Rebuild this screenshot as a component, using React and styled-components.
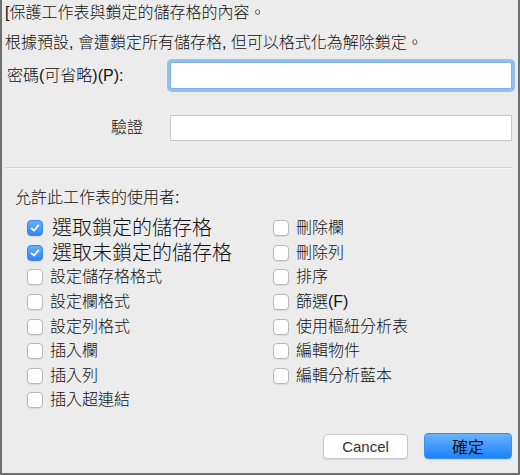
import React from "react";
import styled, { createGlobalStyle } from "styled-components";

const GlobalStyle = createGlobalStyle`
  html, body {
    margin: 0;
    padding: 0;
    background: #ececec;
  }
  body {
    font-family: "Liberation Sans", "Noto Sans CJK TC", sans-serif;
    font-weight: 300;
    color: #111;
  }
`;

const Dialog = styled.div`
  width: 520px;
  height: 475px;
  box-sizing: border-box;
  border-left: 2px solid #6e6e6e;
  border-right: 2px solid #6e6e6e;
  border-bottom: 2px solid #6e6e6e;
  background: #ececec;
  display: flex;
  flex-direction: column;
  overflow: hidden;
`;

const Intro = styled.div`
  padding: 3px 0 0 3px;
  font-size: 16px;
  line-height: 20px;

  p {
    margin: 0;
  }
  p + p {
    margin-top: 10px;
  }
`;

const Form = styled.div`
  margin-top: 9px;
  display: grid;
  grid-template-columns: 168px 342px;
  grid-template-rows: 27px 26px;
  row-gap: 26px;
`;

const Label = styled.label`
  align-self: center;
  font-size: 16px;
  line-height: 20px;
  text-align: ${(p) => (p.$right ? "right" : "left")};
  padding: ${(p) => (p.$right ? "0 27px 0 0" : "0 0 0 5px")};
`;

const Field = styled.input`
  box-sizing: border-box;
  width: 100%;
  height: 100%;
  margin: 0;
  background: #fff;
  border: 1px solid ${(p) => (p.$focused ? "#7fb0ee" : "#c9c9c9")};
  box-shadow: ${(p) => (p.$focused ? "0 0 0 3px #92bff2" : "none")};
  border-radius: ${(p) => (p.$focused ? "2px" : "0")};
  outline: none;
`;

const Separator = styled.hr`
  margin: 26px 6px 0 3px;
  border: 0;
  border-top: 1px solid #d2d2d2;
  border-bottom: 1px solid #f6f6f6;
  height: 0;
`;

const SectionTitle = styled.div`
  margin-top: 19px;
  padding-left: 13px;
  font-size: 16px;
  line-height: 20px;
`;

const Options = styled.div`
  margin-top: 8px;
  padding-left: 25px;
  display: grid;
  grid-auto-flow: column;
  grid-template-columns: 246px 1fr;
  grid-template-rows: repeat(8, 24.6px);
`;

const Option = styled.label`
  display: flex;
  align-items: center;
  gap: ${(p) => (p.$big ? "9px" : "7px")};
  font-size: ${(p) => (p.$big ? "20px" : "16px")};
  line-height: 20px;
  white-space: nowrap;
`;

const Box = styled.span`
  box-sizing: border-box;
  flex: none;
  width: 16px;
  height: 16px;
  border-radius: 4px;
  display: flex;
  align-items: center;
  justify-content: center;
  background: ${(p) =>
    p.$checked ? "linear-gradient(#6aaefa, #2f86f5)" : "#fff"};
  border: 1px solid ${(p) => (p.$checked ? "#3a87ec" : "#b9b9b9")};
  box-shadow: 0 1px 1px rgba(0, 0, 0, 0.08);
`;

const Footer = styled.div`
  margin-top: auto;
  padding: 0 6px 14px 0;
  display: flex;
  justify-content: flex-end;
  align-items: center;
  gap: 16px;
`;

const Button = styled.button`
  box-sizing: border-box;
  width: ${(p) => (p.$primary ? "88px" : "85px")};
  height: ${(p) => (p.$primary ? "26px" : "25px")};
  border-radius: 4px;
  font-family: "Liberation Sans", "Noto Sans CJK TC", sans-serif;
  font-weight: 400;
  font-size: ${(p) => (p.$primary ? "16px" : "15px")};
  color: ${(p) => (p.$primary ? "#111" : "#333")};
  background: ${(p) =>
    p.$primary ? "linear-gradient(#6ab2fb, #1a82fb)" : "#fff"};
  border: 1px solid ${(p) => (p.$primary ? "#3b8ef4" : "#c8c8c8")};
  box-shadow: 0 1px 1px rgba(0, 0, 0, 0.1);
  padding: 0;
`;

const Check = () => (
  <svg width="12" height="12" viewBox="0 0 12 12">
    <path
      d="M2.6 6.3 L5 8.7 L9.4 3.4"
      fill="none"
      stroke="#fff"
      strokeWidth="1.7"
      strokeLinecap="round"
      strokeLinejoin="round"
    />
  </svg>
);

const options = [
  { text: "選取鎖定的儲存格", checked: true, big: true },
  { text: "選取未鎖定的儲存格", checked: true, big: true },
  { text: "設定儲存格格式" },
  { text: "設定欄格式" },
  { text: "設定列格式" },
  { text: "插入欄" },
  { text: "插入列" },
  { text: "插入超連結" },
  { text: "刪除欄" },
  { text: "刪除列" },
  { text: "排序" },
  { text: "篩選(F)" },
  { text: "使用樞紐分析表" },
  { text: "編輯物件" },
  { text: "編輯分析藍本" },
];

export default function App() {
  return (
    <>
      <GlobalStyle />
      <Dialog>
        <Intro>
          <p>[保護工作表與鎖定的儲存格的內容。</p>
          <p>根據預設, 會遭鎖定所有儲存格, 但可以格式化為解除鎖定。</p>
        </Intro>
        <Form>
          <Label>密碼(可省略)(P):</Label>
          <Field type="password" $focused />
          <Label $right>驗證</Label>
          <Field type="password" />
        </Form>
        <Separator />
        <SectionTitle>允許此工作表的使用者:</SectionTitle>
        <Options>
          {options.map((o) => (
            <Option key={o.text} $big={o.big}>
              <Box $checked={o.checked}>{o.checked && <Check />}</Box>
              {o.text}
            </Option>
          ))}
        </Options>
        <Footer>
          <Button>Cancel</Button>
          <Button $primary>確定</Button>
        </Footer>
      </Dialog>
    </>
  );
}
